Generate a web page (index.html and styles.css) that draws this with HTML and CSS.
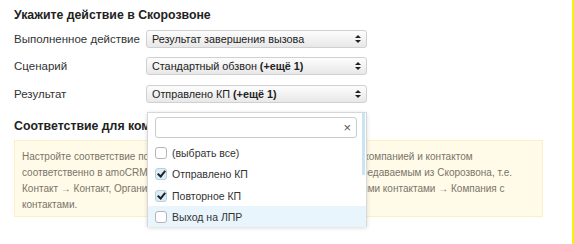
FILE: index.html
```html
<html>
    <head>
        <meta name="viewport" content="width=device-width, initial-scale=1">
        <title>Скорозвон — настройки</title>
        <link rel="stylesheet" href="styles.css">
    </head>
    <body>
        <div class="page">
            <div class="settings">
                <h3 class="section-title">Укажите действие в Скорозвоне</h3>
                <div class="form-row">
                    <span class="form-label">Выполненное действие</span>
                    <div class="select-box">
                        <span class="select-text">Результат завершения вызова</span>
                        <span class="select-arrows"></span>
                    </div>
                </div>
                <div class="form-row">
                    <span class="form-label">Сценарий</span>
                    <div class="select-box">
                        <span class="select-text">Стандартный обзвон <b>(+ещё 1)</b></span>
                        <span class="select-arrows"></span>
                    </div>
                </div>
                <div class="form-row">
                    <span class="form-label">Результат</span>
                    <div class="select-wrap">
                        <div class="select-box">
                            <span class="select-text">Отправлено КП <b>(+ещё 1)</b></span>
                            <span class="select-arrows"></span>
                        </div>
                        <div class="dropdown">
                            <div class="dropdown-search">
                                <input type="text" class="search-input">
                                <span class="search-clear">×</span>
                            </div>
                            <ul class="option-list">
                                <li class="option"><span class="check"></span>(выбрать все)</li>
                                <li class="option"><span class="check checked"></span>Отправлено КП</li>
                                <li class="option"><span class="check checked"></span>Повторное КП</li>
                                <li class="option hover"><span class="check"></span>Выход на ЛПР</li>
                            </ul>
                            <div class="scroll-thumb"></div>
                        </div>
                    </div>
                </div>

                <h3 class="section-title second">Соответствие для компаний и контактов</h3>
                <div class="alert">
                    Настройте соответствие пользовательских полей сделки, связываемой с компанией и контактом<br>
                    соответственно в amoCRM и полям сделки с аналогичными данными, передаваемым из Скорозвона, т.е.<br>
                    Контакт → Контакт, Организация → Компания, Организация с привязанными контактами → Компания с<br>
                    контактами.
                </div>
            </div>
        </div>
    </body>
</html>
```

FILE: styles.css
```css
body {
    margin: 0;
    font-family: "Liberation Sans", Arial, sans-serif;
    font-size: 11.5px;
    color: #333;
    background: #fff;
}
.page {
    height: 244px;
    border-right: 2px solid #f5f500;
    width: 572px;
    overflow: hidden;
}
.settings {
    padding-left: 14px;
    width: 529px;
}
.section-title {
    font-size: 12.3px;
    font-weight: 700;
    color: #222;
    margin: 0;
    padding-top: 8px;
    height: 17px;
    line-height: 14px;
}
.section-title.second {
    padding-top: 11px;
    height: 21.5px;
}
.form-row {
    display: flex;
    align-items: center;
    height: 27.5px;
}
.form-label {
    width: 132px;
}
.select-wrap {
    position: relative;
}
.select-box {
    width: 214px;
    height: 16px;
    border: 1px solid #d0d0d0;
    border-radius: 3px;
    background: linear-gradient(#fdfdfd, #e8e8e8);
    display: flex;
    align-items: center;
    justify-content: space-between;
    padding: 0 0 0 5px;
    box-sizing: content-box;
    color: #222;
    font-size: 10.8px;
}
.select-text b {
    font-weight: 700;
}
.select-arrows {
    width: 16px;
    height: 16px;
    position: relative;
}
.select-arrows:before, .select-arrows:after {
    content: "";
    position: absolute;
    left: 5px;
    border-left: 3px solid transparent;
    border-right: 3px solid transparent;
}
.select-arrows:before {
    top: 4px;
    border-bottom: 3px solid #222;
}
.select-arrows:after {
    top: 9px;
    border-top: 3px solid #222;
}
.dropdown {
    position: absolute;
    top: 27px;
    left: 1px;
    width: 218px;
    height: 114px;
    background: #fff;
    border: 1px solid #d8d8d8;
    border-bottom: none;
    box-shadow: 0 1px 4px rgba(0, 0, 0, 0.15);
    overflow: hidden;
    z-index: 10;
    font-size: 10.5px;
}
.dropdown-search {
    position: relative;
    margin: 4px 0 0 7px;
    width: 202px;
}
.search-input {
    width: 202px;
    height: 21px;
    border: 1px solid #ccc;
    border-radius: 3px;
    box-sizing: border-box;
    display: block;
}
.search-clear {
    position: absolute;
    right: 6px;
    top: 3px;
    font-size: 13px;
    color: #555;
}
.option-list {
    list-style: none;
    margin: 4px 0 0;
    padding: 0;
}
.option {
    height: 21.5px;
    display: flex;
    align-items: center;
    padding-left: 7px;
    color: #333;
}
.option.hover {
    background: #e8f5fd;
}
.check {
    width: 10px;
    height: 10px;
    border: 1px solid #b5b5b5;
    border-radius: 3px;
    background: #fff;
    margin-right: 5px;
    position: relative;
}
.check.checked {
    background: #d9edf9;
    border-color: #b8cfdc;
}
.check.checked:after {
    content: "";
    position: absolute;
    left: 3px;
    top: 0px;
    width: 3px;
    height: 6px;
    border-right: 2px solid #222;
    border-bottom: 2px solid #222;
    transform: rotate(40deg);
}
.scroll-thumb {
    position: absolute;
    right: 1px;
    top: 0;
    width: 3px;
    height: 62px;
    background: #c9e4f3;
}
.alert {
    height: 61px;
    padding: 8px 7px 6px;
    background: #fffbe8;
    border: 1px solid #fbefc4;
    color: #7a7468;
    font-size: 10px;
    line-height: 16px;
    white-space: nowrap;
}
```
